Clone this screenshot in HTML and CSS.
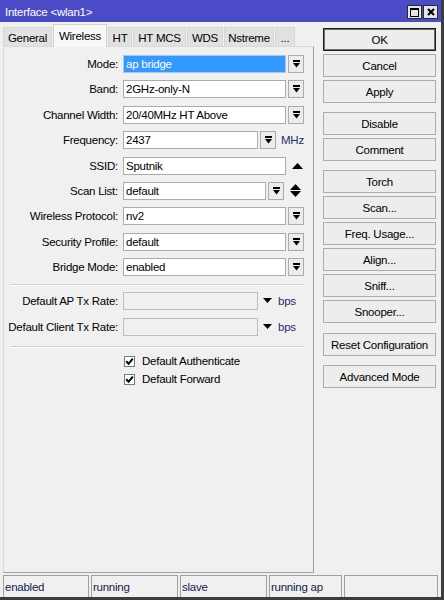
FILE: index.html
```html
<!DOCTYPE html>
<html>
<head>
<meta charset="utf-8">
<title>Interface &lt;wlan1&gt;</title>
<link rel="stylesheet" href="styles.css">
</head>
<body>
<div class="window">
  <div class="titlebar">
    <span class="title">Interface &lt;wlan1&gt;</span>
    <div class="tb-buttons">
      <span class="tb-btn"><svg width="9" height="9" viewBox="0 0 9 9"><rect x="0.5" y="0.5" width="8" height="8" fill="none" stroke="#000"/><rect width="9" height="2"/></svg></span>
      <span class="tb-btn"><svg width="8" height="8" viewBox="0 0 8 8"><path d="M1 1L7 7M7 1L1 7" stroke="#000" stroke-width="2"/></svg></span>
    </div>
  </div>
  <div class="main">
    <div class="left">
      <div class="tabs">
        <div class="tab t-general">General</div>
        <div class="tab active t-wireless">Wireless</div>
        <div class="tab t-ht">HT</div>
        <div class="tab t-htmcs">HT MCS</div>
        <div class="tab t-wds">WDS</div>
        <div class="tab t-nstreme">Nstreme</div>
        <div class="tab t-more">...</div>
      </div>
      <div class="panel">
        <div class="rows">
          <div class="row">
            <span class="lbl">Mode:</span>
            <div class="field w-full sel">ap bridge</div>
            <div class="dd"><svg width="7" height="8" viewBox="0 0 7 8"><rect width="7" height="2"/><path d="M0 3h7L3.5 7.5z"/></svg></div>
          </div>
          <div class="row">
            <span class="lbl">Band:</span>
            <div class="field w-full">2GHz-only-N</div>
            <div class="dd"><svg width="7" height="8" viewBox="0 0 7 8"><rect width="7" height="2"/><path d="M0 3h7L3.5 7.5z"/></svg></div>
          </div>
          <div class="row">
            <span class="lbl">Channel Width:</span>
            <div class="field w-full">20/40MHz HT Above</div>
            <div class="dd"><svg width="7" height="8" viewBox="0 0 7 8"><rect width="7" height="2"/><path d="M0 3h7L3.5 7.5z"/></svg></div>
          </div>
          <div class="row">
            <span class="lbl">Frequency:</span>
            <div class="field w-short">2437</div>
            <div class="dd"><svg width="7" height="8" viewBox="0 0 7 8"><rect width="7" height="2"/><path d="M0 3h7L3.5 7.5z"/></svg></div>
            <span class="unit">MHz</span>
          </div>
          <div class="row">
            <span class="lbl">SSID:</span>
            <div class="field w-full">Sputnik</div>
            <div class="side"><svg width="11" height="6" viewBox="0 0 11 6"><path d="M0 6h11L5.5 0z"/></svg></div>
          </div>
          <div class="row">
            <span class="lbl">Scan List:</span>
            <div class="field w-mid">default</div>
            <div class="dd"><svg width="7" height="8" viewBox="0 0 7 8"><rect width="7" height="2"/><path d="M0 3h7L3.5 7.5z"/></svg></div>
            <div class="side"><svg width="11" height="13" viewBox="0 0 11 13"><path d="M0 6h11L5.5 0z M0 7h11L5.5 13z"/></svg></div>
          </div>
          <div class="row">
            <span class="lbl">Wireless Protocol:</span>
            <div class="field w-full">nv2</div>
            <div class="dd"><svg width="7" height="8" viewBox="0 0 7 8"><rect width="7" height="2"/><path d="M0 3h7L3.5 7.5z"/></svg></div>
          </div>
          <div class="row">
            <span class="lbl">Security Profile:</span>
            <div class="field w-full">default</div>
            <div class="dd"><svg width="7" height="8" viewBox="0 0 7 8"><rect width="7" height="2"/><path d="M0 3h7L3.5 7.5z"/></svg></div>
          </div>
          <div class="row">
            <span class="lbl">Bridge Mode:</span>
            <div class="field w-full">enabled</div>
            <div class="dd"><svg width="7" height="8" viewBox="0 0 7 8"><rect width="7" height="2"/><path d="M0 3h7L3.5 7.5z"/></svg></div>
          </div>
        </div>
        <div class="sep sep-a"></div>
        <div class="rows rows-tx">
          <div class="row">
            <span class="lbl">Default AP Tx Rate:</span>
            <div class="field w-short disabled"></div>
            <span class="tri"><svg width="9" height="5" viewBox="0 0 9 5"><path d="M0 0h9L4.5 5z"/></svg></span>
            <span class="unit">bps</span>
          </div>
          <div class="row">
            <span class="lbl">Default Client Tx Rate:</span>
            <div class="field w-short disabled"></div>
            <span class="tri"><svg width="9" height="5" viewBox="0 0 9 5"><path d="M0 0h9L4.5 5z"/></svg></span>
            <span class="unit">bps</span>
          </div>
        </div>
        <div class="sep sep-b"></div>
        <div class="checks">
          <div class="check-row">
            <span class="cb"><svg width="9" height="9" viewBox="0 0 9 9"><path d="M1.2 4.2L3.6 6.8L7.8 1.6" fill="none" stroke="#000" stroke-width="2"/></svg></span>
            <span class="cb-text">Default Authenticate</span>
          </div>
          <div class="check-row">
            <span class="cb"><svg width="9" height="9" viewBox="0 0 9 9"><path d="M1.2 4.2L3.6 6.8L7.8 1.6" fill="none" stroke="#000" stroke-width="2"/></svg></span>
            <span class="cb-text">Default Forward</span>
          </div>
        </div>
      </div>
    </div>
    <div class="buttons">
      <div class="btn default">OK</div>
      <div class="btn">Cancel</div>
      <div class="btn">Apply</div>
      <div class="btn group">Disable</div>
      <div class="btn">Comment</div>
      <div class="btn group">Torch</div>
      <div class="btn">Scan...</div>
      <div class="btn">Freq. Usage...</div>
      <div class="btn">Align...</div>
      <div class="btn">Sniff...</div>
      <div class="btn">Snooper...</div>
      <div class="btn group-lg">Reset Configuration</div>
      <div class="btn group">Advanced Mode</div>
    </div>
  </div>
  <div class="status">
    <div class="cell">enabled</div>
    <div class="cell">running</div>
    <div class="cell">slave</div>
    <div class="cell">running ap</div>
    <div class="cell"></div>
  </div>
</div>
</body>
</html>
```
FILE: styles.css
```css
* { box-sizing: border-box; }
html, body { margin: 0; padding: 0; }
body {
  font-family: "Liberation Sans", Arial, sans-serif;
  font-size: 11.5px;
  letter-spacing: -0.25px;
  color: #000;
  background: #f0f0f0;
}
.window {
  width: 444px;
  height: 600px;
  background: #f0f0f0;
  border-right: 3px solid #3c3c3c;
  border-bottom: 3px solid #3c3c3c;
  display: flex;
  flex-direction: column;
  overflow: hidden;
}
.titlebar {
  height: 22px;
  flex: none;
  background: #4b4bc8;
  color: #fff;
  display: flex;
  align-items: center;
}
.title { padding-left: 5px; padding-top: 1px; }
.tb-buttons { margin-left: auto; margin-right: 3px; display: flex; gap: 1px; margin-top: 2px; }
.tb-btn {
  width: 15px; height: 14px;
  background: #e4e4e4;
  border: 1px solid #2a2a2a;
  display: flex; align-items: center; justify-content: center;
}
.main { flex: 1; display: flex; padding-left: 3px; min-height: 0; }
.left { width: 311px; flex: none; display: flex; flex-direction: column; }
.tabs { display: flex; align-items: flex-end; gap: 1px; height: 22px; margin-top: 2px; flex: none; }
.tab {
  height: 19px;
  background: #e1e1e1;
  border: 1px solid #d6d6d6;
  border-bottom: none;
  display: flex; align-items: center; justify-content: center;
  padding-top: 1px;
  white-space: nowrap;
}
.tab.active {
  height: 23px;
  margin-bottom: -1px;
  background: #f8f8f8;
  border-color: #d0d0d0;
  position: relative;
  z-index: 1;
  padding-bottom: 2px;
}
.t-general { width: 49px; }
.t-wireless { width: 54px; }
.t-ht { width: 24px; }
.t-htmcs { width: 53px; }
.t-wds { width: 36px; }
.t-nstreme { width: 50px; }
.t-more { width: 20px; }
.panel {
  flex: 1;
  margin-bottom: 2px;
  border: 1px solid;
  border-color: #d9d9d9 #a0a0a0 #a0a0a0 #d9d9d9;
  background: #f0f0f0;
  padding-top: 8px;
}
.rows { display: flex; flex-direction: column; gap: 7.4px; }
.rows-tx { gap: 8px; }
.row { display: flex; align-items: center; height: 18px; }
.lbl { width: 114px; flex: none; text-align: right; margin-right: 5px; white-space: nowrap; }
.field {
  height: 18px;
  flex: none;
  background: #fff;
  border: 1px solid #ababab;
  padding-left: 2px;
  display: flex; align-items: center;
  white-space: nowrap; overflow: hidden;
}
.w-full { width: 163px; }
.w-short { width: 135px; }
.w-mid { width: 143px; }
.field.sel { background: #3399ff; color: #fff; border-color: #a8c8ea; }
.field.disabled { background: #f0f0f0; border-color: #bdbdbd; }
.dd {
  width: 16px; height: 18px; flex: none;
  margin-left: 2px;
  border: 1px solid #ababab;
  background: #ececec;
  display: flex; align-items: center; justify-content: center;
}
.side { width: 16px; margin-left: 3px; display: flex; align-items: center; justify-content: center; }
.unit { margin-left: 5px; color: #1f2d6e; }
.tri { margin-left: 5px; display: flex; align-items: center; }
.tri + .unit { margin-left: 6px; }
.sep { height: 2px; border-top: 1px solid #d2d2d2; border-bottom: 1px solid #fbfbfb; margin-left: 6px; margin-right: 8px; }
.sep-a { margin-top: 7.8px; margin-bottom: 6px; }
.sep-b { margin-top: 10px; margin-bottom: 4.5px; }
.check-row { display: flex; align-items: center; height: 18px; padding-left: 120px; }
.cb {
  width: 11px; height: 11px; flex: none;
  border: 1px solid #7a7a7a;
  background: #fff;
  display: flex; align-items: center; justify-content: center;
}
.cb-text { margin-left: 7px; }
.buttons { margin-left: 9px; width: 113px; flex: none; padding-top: 6px; display: flex; flex-direction: column; }
.btn {
  height: 23px; flex: none;
  margin-top: 3px;
  border: 1px solid #adadad;
  background: #ededed;
  display: flex; align-items: center; justify-content: center;
  white-space: nowrap;
}
.btn:first-child { margin-top: 0; }
.btn.default { border-color: #1e1e1e; box-shadow: inset 0 0 0 1px #6e6e6e; }
.btn.group { margin-top: 9px; }
.btn.group-lg { margin-top: 10px; }
.status {
  height: 22px; flex: none;
  display: grid;
  grid-template-columns: 86px 87px 87px 73px 94px;
  gap: 2px;
  padding-left: 3px;
}
.cell {
  border: 1px solid #a0a0a0;
  border-bottom: none;
  padding-left: 1px;
  display: flex; align-items: center;
  color: #151a4e;
  white-space: nowrap;
}
```
